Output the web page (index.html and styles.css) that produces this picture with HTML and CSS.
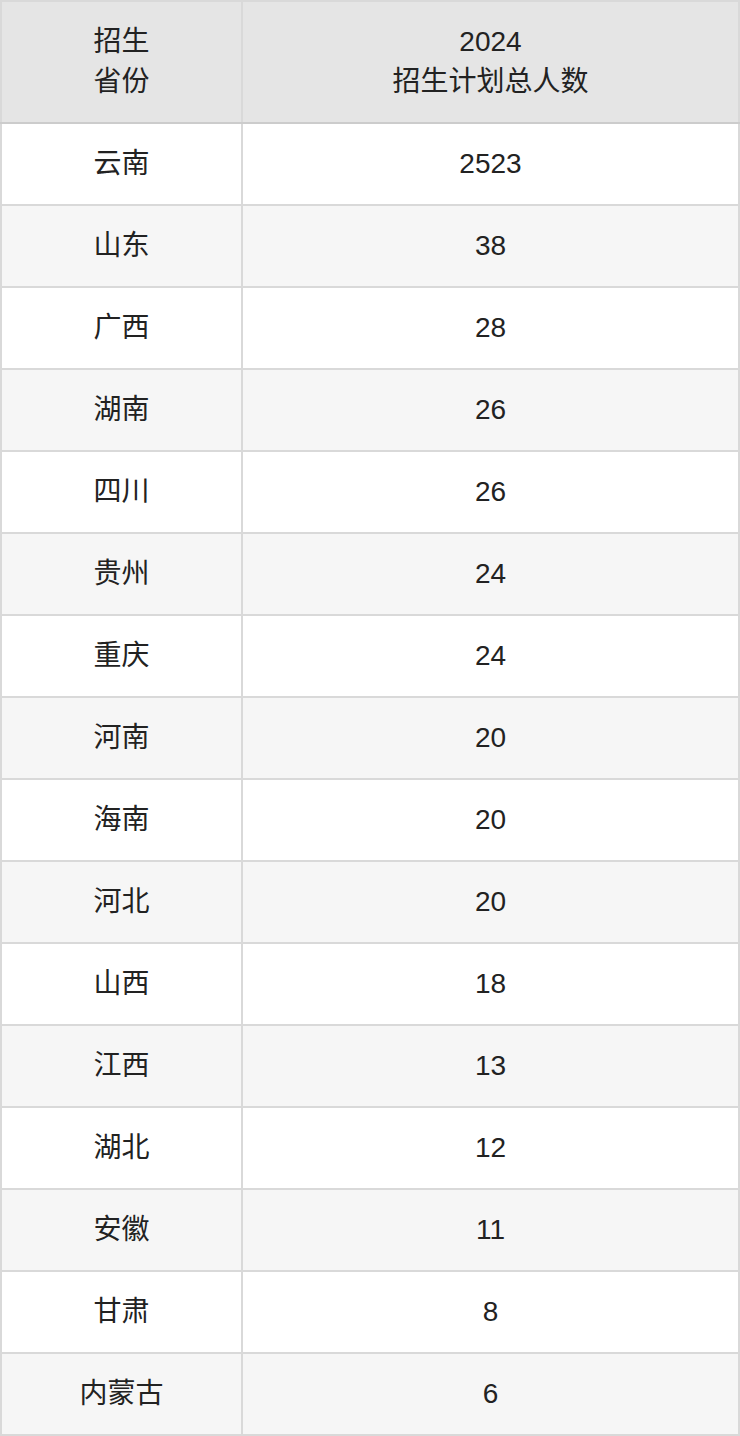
FILE: index.html
```html
<!DOCTYPE html>
<html lang="zh">
<head>
<meta charset="utf-8">
<link rel="stylesheet" href="styles.css">
</head>
<body>
<table class="plan">
  <thead>
    <tr><th class="c1">招生<br>省份</th><th class="c2">2024<br>招生计划总人数</th></tr>
  </thead>
  <tbody>
    <tr><td>云南</td><td>2523</td></tr>
    <tr><td>山东</td><td>38</td></tr>
    <tr><td>广西</td><td>28</td></tr>
    <tr><td>湖南</td><td>26</td></tr>
    <tr><td>四川</td><td>26</td></tr>
    <tr><td>贵州</td><td>24</td></tr>
    <tr><td>重庆</td><td>24</td></tr>
    <tr><td>河南</td><td>20</td></tr>
    <tr><td>海南</td><td>20</td></tr>
    <tr><td>河北</td><td>20</td></tr>
    <tr><td>山西</td><td>18</td></tr>
    <tr><td>江西</td><td>13</td></tr>
    <tr><td>湖北</td><td>12</td></tr>
    <tr><td>安徽</td><td>11</td></tr>
    <tr><td>甘肃</td><td>8</td></tr>
    <tr><td>内蒙古</td><td>6</td></tr>
  </tbody>
</table>
</body>
</html>
```
FILE: styles.css
```css
html, body {
  margin: 0;
  padding: 0;
  background: #ffffff;
}
.plan {
  width: 740px;
  border-collapse: collapse;
  table-layout: fixed;
  font-family: "Liberation Sans", "Noto Sans CJK SC", sans-serif;
  font-size: 28px;
  color: #222222;
  border: 2px solid #d9d9d9;
}
.plan th, .plan td {
  border: 2px solid #d9d9d9;
  text-align: center;
  vertical-align: middle;
  font-weight: normal;
  padding: 0;
}
.plan th {
  background: #e5e5e5;
  height: 120px;
  line-height: 40px;
  border-bottom-color: #cccccc;
}
.plan .c1 { width: 239px; }
.plan td {
  height: 80px;
  line-height: 40px;
}
.plan tbody tr:nth-child(even) td {
  background: #f6f6f6;
}
```
